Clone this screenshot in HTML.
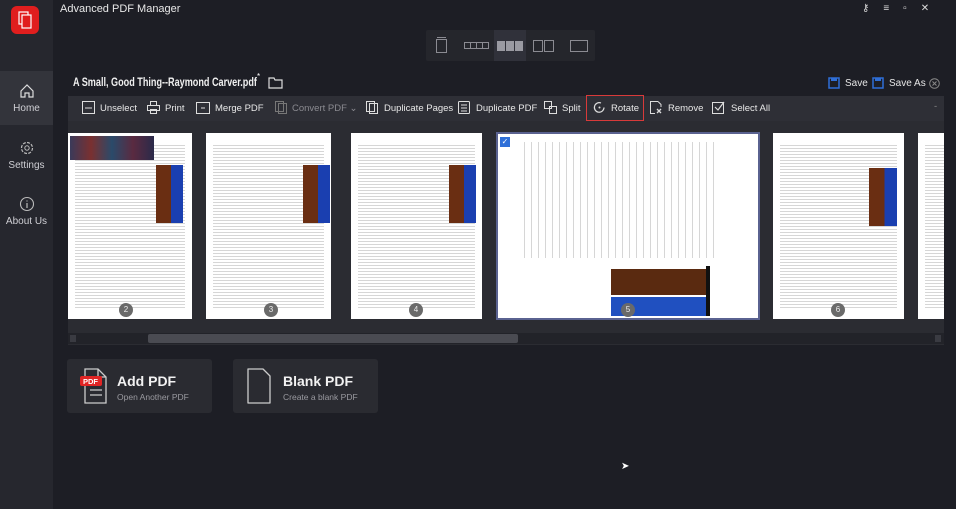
<!DOCTYPE html>
<html><head><meta charset="utf-8"><style>
*{margin:0;padding:0;box-sizing:border-box}
body{width:956px;height:509px;background:#1d1e25;font-family:"Liberation Sans",sans-serif;color:#e6e6e6;position:relative;overflow:hidden}
.abs{position:absolute}
.side{left:0;top:0;width:53px;height:509px;background:#26272e}
.logo{left:11px;top:6px;width:28px;height:28px;border-radius:6px;background:#e01e1e}
.nav{left:0;width:53px;height:54px;text-align:center;font-size:10px;color:#cfcfd4}
.nav svg{display:block;margin:12px auto 4px}
.tb{left:68px;top:96px;width:876px;height:25px;background:#2e2f36;font-size:9.5px;color:#e8e8e8}
.tb span{position:absolute;top:7px;white-space:nowrap}
.tb svg{position:absolute;top:5px}
.area{left:68px;top:121px;width:876px;height:224px;background:#2b2c32}
.pg{position:absolute;top:133px;height:186px;padding:10px 7px;
background:repeating-linear-gradient(#fff 0 2px,#d6d6d6 2px 3px) content-box,linear-gradient(#fff,#fff) border-box}
.num{position:absolute;width:14px;height:14px;border-radius:7px;background:#6a6a6a;color:#eee;font-size:8px;text-align:center;line-height:14px}
.ban{position:absolute;background:linear-gradient(90deg,#6a2e12 0 55%,#1a3fb0 55%)}
.card{top:359px;height:54px;background:#2a2b31;border-radius:3px}
.card b{position:absolute;left:50px;top:14px;font-size:14px;color:#f2f2f2}
.card i{position:absolute;left:50px;top:33px;font-size:8.5px;font-style:normal;color:#9a9aa0}
</style></head><body>
<div class="abs side"></div>
<div class="abs logo"><svg width="28" height="28"><rect x="8" y="6" width="9" height="12" fill="none" stroke="#fff" stroke-width="1.2"/><rect x="11" y="9" width="9" height="13" fill="#e01e1e" stroke="#fff" stroke-width="1.2"/></svg></div>
<div class="abs" style="left:60px;top:3px;font-size:11px;color:#e8e8e8">Advanced PDF Manager</div>
<div class="abs" style="left:862px;top:3px;font-size:10px;color:#ddd;letter-spacing:14px">⚷≡▫✕</div>
<div class="abs nav" style="top:71px;background:#33343b"><svg width="16" height="16"><path d="M2 8L8 2l6 6v6H10v-4H6v4H2z" fill="none" stroke="#ddd" stroke-width="1.2"/></svg>Home</div>
<div class="abs nav" style="top:128px"><svg width="16" height="16"><circle cx="8" cy="8" r="5.5" fill="none" stroke="#bbb" stroke-width="1.2" stroke-dasharray="3 1.3"/><circle cx="8" cy="8" r="2.2" fill="none" stroke="#bbb"/></svg>Settings</div>
<div class="abs nav" style="top:184px"><svg width="16" height="16"><circle cx="8" cy="8" r="6.5" fill="none" stroke="#bbb" stroke-width="1.1"/><path d="M8 7v5M8 4.5v1" stroke="#bbb" stroke-width="1.2"/></svg>About Us</div>
<div class="abs" style="left:426px;top:30px;width:169px;height:31px;background:#25262c;border-radius:2px"></div>
<div class="abs" style="left:494px;top:30px;width:32px;height:31px;background:#30313a"></div>
<svg class="abs" style="left:426px;top:30px" width="169" height="31"><g fill="none" stroke="#8b8b92"><rect x="10.5" y="9.5" width="10" height="13"/><path d="M11 7.5h9"/><rect x="38.5" y="12.5" width="6" height="6"/><rect x="44.5" y="12.5" width="6" height="6"/><rect x="50.5" y="12.5" width="6" height="6"/><rect x="56.5" y="12.5" width="6" height="6"/><rect x="107.5" y="10.5" width="9" height="11"/><rect x="118.5" y="10.5" width="9" height="11"/><rect x="144.5" y="10.5" width="17" height="11"/></g><g fill="#9a9aa2"><rect x="71" y="11" width="8" height="10"/><rect x="80" y="11" width="8" height="10"/><rect x="89" y="11" width="8" height="10"/></g></svg>
<div class="abs" style="left:73px;top:77px;font-size:11.5px;color:#f0f0f0;font-weight:bold;white-space:nowrap;transform:scaleX(0.79);transform-origin:left">A Small, Good Thing--Raymond Carver.pdf</div>
<div class="abs" style="left:257px;top:72px;font-size:8px;color:#fff">*</div>
<svg class="abs" style="left:268px;top:75px" width="16" height="14"><path d="M1 3h5l1 2h7v8H1z" fill="none" stroke="#ddd" stroke-width="1.2"/></svg>
<svg class="abs" style="left:828px;top:77px" width="12" height="12"><rect x="1" y="1" width="10" height="10" fill="none" stroke="#2f6fd8" stroke-width="1.5"/><rect x="3" y="1" width="6" height="3" fill="#2f6fd8"/></svg>
<div class="abs" style="left:845px;top:78px;font-size:10px">Save</div>
<svg class="abs" style="left:872px;top:77px" width="12" height="12"><rect x="1" y="1" width="10" height="10" fill="none" stroke="#2f6fd8" stroke-width="1.5"/><rect x="3" y="1" width="6" height="3" fill="#2f6fd8"/></svg>
<div class="abs" style="left:889px;top:78px;font-size:10px">Save As</div>
<svg class="abs" style="left:929px;top:78px" width="11" height="11"><circle cx="5.5" cy="5.5" r="4.8" fill="none" stroke="#888"/><path d="M3.5 3.5l4 4M7.5 3.5l-4 4" stroke="#888"/></svg>
<div class="abs tb">
<svg style="left:14px" width="13" height="13"><rect x=".5" y=".5" width="12" height="12" fill="none" stroke="#ddd"/><path d="M3 7h7" stroke="#ddd"/></svg><span style="left:32px">Unselect</span>
<svg style="left:79px" width="13" height="13"><rect x="3.5" y=".5" width="6" height="4" fill="none" stroke="#ddd"/><rect x=".5" y="4.5" width="12" height="5" fill="none" stroke="#ddd"/><rect x="3.5" y="8.5" width="6" height="4" fill="none" stroke="#ddd"/></svg><span style="left:97px">Print</span>
<svg style="left:128px" width="14" height="13"><rect x=".5" y="1.5" width="13" height="11" fill="none" stroke="#ddd"/><path d="M5 7h4" stroke="#ddd"/></svg><span style="left:147px">Merge PDF</span>
<svg style="left:207px" width="12" height="13"><rect x=".5" y=".5" width="8" height="10" fill="none" stroke="#777"/><rect x="3.5" y="2.5" width="8" height="10" fill="none" stroke="#777"/></svg><span style="left:224px;color:#8a8a90">Convert PDF ⌄</span>
<svg style="left:298px" width="12" height="13"><rect x=".5" y=".5" width="8" height="10" fill="none" stroke="#ddd"/><rect x="3.5" y="2.5" width="8" height="10" fill="none" stroke="#ddd"/></svg><span style="left:316px">Duplicate Pages</span>
<svg style="left:390px" width="12" height="13"><rect x=".5" y=".5" width="11" height="12" rx="1" fill="none" stroke="#ddd"/><path d="M3 4h6M3 7h6M3 10h6" stroke="#ddd"/></svg><span style="left:408px">Duplicate PDF</span>
<svg style="left:476px" width="13" height="13"><rect x=".5" y=".5" width="7" height="7" fill="none" stroke="#ddd"/><rect x="5.5" y="5.5" width="7" height="7" fill="none" stroke="#ddd"/></svg><span style="left:494px">Split</span>
<div style="position:absolute;left:518px;top:-1px;width:58px;height:26px;border:1.5px solid #d83a3a"></div>
<svg style="left:525px" width="13" height="13"><path d="M11 6.5A4.8 4.8 0 1 1 8 2" fill="none" stroke="#ddd" stroke-width="1.2"/><circle cx="6.5" cy="6.5" r="1" fill="#ddd"/></svg><span style="left:543px">Rotate</span>
<svg style="left:582px" width="13" height="13"><path d="M8 .5H.5v12H5M8 .5l3 3V6" fill="none" stroke="#ddd"/><path d="M7 8l4 4M11 8l-4 4" stroke="#ddd" stroke-width="1.3"/></svg><span style="left:600px">Remove</span>
<svg style="left:644px" width="13" height="13"><rect x=".5" y="1.5" width="11" height="11" fill="none" stroke="#ddd"/><path d="M3 6l3 3 6-8" fill="none" stroke="#ddd" stroke-width="1.2"/></svg><span style="left:663px">Select All</span>
<span style="left:866px;top:5px;color:#888">-</span>
</div>
<div class="abs area"></div>
<div class="pg" style="left:68px;width:124px"></div>
<div class="abs" style="left:70px;top:136px;width:84px;height:24px;background:linear-gradient(90deg,#3a3a5a,#7a3030,#2a4a6a,#5a2a40,#2a2a4a)"></div>
<div class="ban" style="left:156px;top:165px;width:27px;height:58px"></div>
<div class="pg" style="left:206px;width:125px"></div>
<div class="ban" style="left:303px;top:165px;width:27px;height:58px"></div>
<div class="pg" style="left:351px;width:131px"></div>
<div class="ban" style="left:449px;top:165px;width:27px;height:58px"></div>
<div class="abs" style="left:496px;top:132px;width:264px;height:188px;border:2px solid #5a6290;padding:8px 40px 60px 20px;background:repeating-linear-gradient(90deg,#fff 0 6px,#d6d6d6 6px 7px) content-box,linear-gradient(#fff,#fff) border-box"></div>
<div class="abs" style="left:500px;top:137px;width:10px;height:10px;background:#2f6fd8;color:#fff;font-size:8px;text-align:center;line-height:10px">✓</div>
<div class="abs" style="left:611px;top:269px;width:95px;height:47px;background:linear-gradient(#5a2a10 0 55%,#fff 55% 60%,#2050c0 60%)"></div>
<div class="abs" style="left:706px;top:266px;width:4px;height:50px;background:#111"></div>
<div class="pg" style="left:773px;width:131px"></div>
<div class="ban" style="left:869px;top:168px;width:28px;height:58px"></div>
<div class="pg" style="left:918px;width:26px;padding-right:0"></div>
<div class="num" style="left:119px;top:303px">2</div>
<div class="num" style="left:264px;top:303px">3</div>
<div class="num" style="left:409px;top:303px">4</div>
<div class="num" style="left:621px;top:303px">5</div>
<div class="num" style="left:831px;top:303px">6</div>
<div class="abs" style="left:68px;top:333px;width:876px;height:11px;background:#222329"></div>
<div class="abs" style="left:148px;top:334px;width:370px;height:9px;background:#4a4b52;border-radius:2px"></div>
<div class="abs" style="left:70px;top:335px;width:6px;height:7px;background:#3a3b42"></div>
<div class="abs" style="left:935px;top:335px;width:6px;height:7px;background:#3a3b42"></div>
<div class="abs card" style="left:67px;width:145px">
<svg style="position:absolute;left:12px;top:9px" width="30" height="36"><path d="M6 1h13l8 8v26H6z" fill="none" stroke="#ccc" stroke-width="1.3"/><path d="M19 1v8h8M11 22h12M11 27h12" fill="none" stroke="#ccc" stroke-width="1.3"/><rect x="1" y="8" width="22" height="10" rx="2" fill="#e02424"/><text x="4" y="16" font-size="7.5" fill="#fff" font-family="Liberation Sans" font-weight="bold">PDF</text></svg>
<b>Add PDF</b><i>Open Another PDF</i></div>
<div class="abs card" style="left:233px;width:145px">
<svg style="position:absolute;left:12px;top:9px" width="30" height="36"><path d="M3 1h15l7 7v27H3z" fill="none" stroke="#ccc" stroke-width="1.3" stroke-linejoin="round"/></svg>
<b>Blank PDF</b><i>Create a blank PDF</i></div>
<div class="abs" style="left:621px;top:461px;font-size:10px;color:#fff">➤</div>
</body></html>
